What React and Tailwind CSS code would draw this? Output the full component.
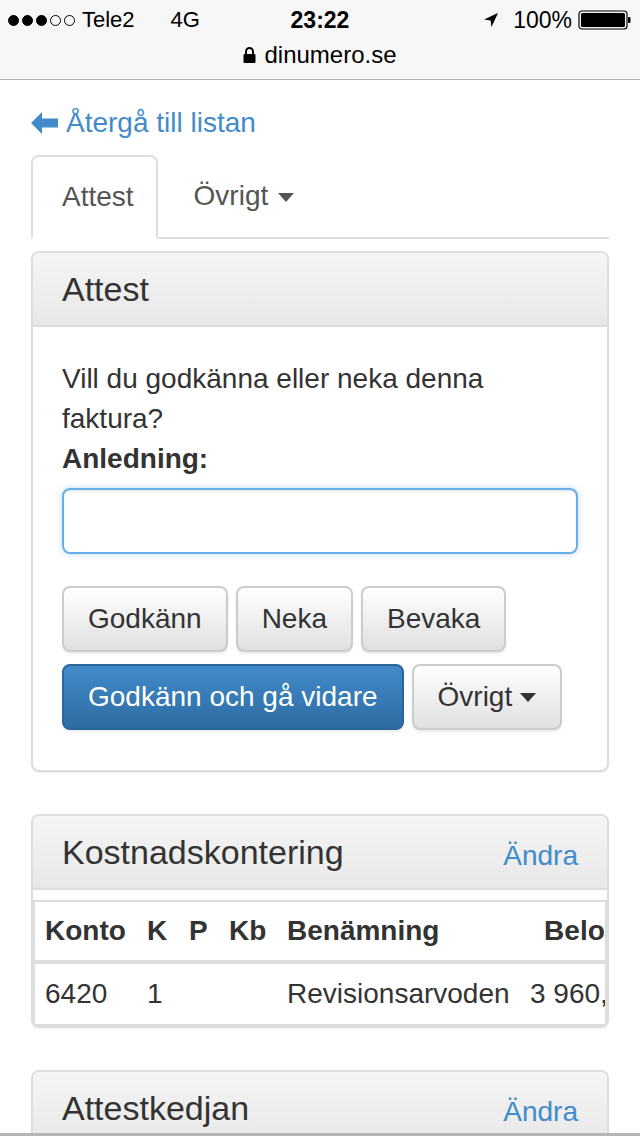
import { useState } from 'react'

function Caret({ className = '' }) {
  return (
    <svg className={className} width="16" height="9" viewBox="0 0 16 9">
      <path d="M0 0h16L8 9z" fill="currentColor" />
    </svg>
  )
}

function StatusBar() {
  return (
    <div className="h-[80px] bg-[#f7f7f7] border-b border-[#b0b0b0] text-black">
      <div className="grid grid-cols-3 items-center h-[40px] px-[8px] text-[22px] leading-none">
        <div className="flex items-center">
          <div className="flex items-center gap-[3px] mr-[7px]">
            {[1, 1, 1, 0, 0].map((on, i) => (
              <span key={i} className={`w-[11px] h-[11px] rounded-full border border-black ${on ? 'bg-black' : ''}`} />
            ))}
          </div>
          <span>Tele2</span>
          <span className="ml-[36px]">4G</span>
        </div>
        <div className="text-center font-bold text-[23px]">23:22</div>
        <div className="flex items-center justify-end">
          <svg width="16" height="16" viewBox="0 0 16 16" className="mr-[14px]">
            <path d="M15 1L1 7.5l6.6.9.9 6.6z" fill="black" />
          </svg>
          <span className="text-[23px]">100%</span>
          <svg width="54" height="20" viewBox="0 0 54 20" className="ml-[6px]">
            <rect x="1" y="1" width="48" height="18" rx="3" fill="none" stroke="black" strokeWidth="1.2" />
            <rect x="3" y="3" width="44" height="14" rx="1.5" fill="black" />
            <rect x="50" y="7" width="2.5" height="6" rx="1" fill="black" />
          </svg>
        </div>
      </div>
      <div className="flex items-center justify-center gap-[8px] h-[30px] text-[24px] leading-none">
        <svg width="13" height="16" viewBox="0 0 13 16">
          <path d="M3 7V4.5a3.5 3.5 0 017 0V7" fill="none" stroke="black" strokeWidth="2" />
          <rect x="0.5" y="7" width="12" height="9" rx="1" fill="black" />
        </svg>
        <span>dinumero.se</span>
      </div>
    </div>
  )
}

function PanelHeader({ title, action }) {
  return (
    <div className="flex items-center justify-between h-[74px] px-[29px] bg-linear-to-b from-[#f5f5f5] to-[#e8e8e8] border-b-2 border-[#dddddd] rounded-t-[6px]">
      <h3 className="text-[34px] leading-none text-[#333]">{title}</h3>
      {action && <a className="text-[28px] text-[#428bca] mt-[8px]">{action}</a>}
    </div>
  )
}

function Btn({ children, primary }) {
  const look = primary
    ? 'bg-linear-to-b from-[#428bca] to-[#2d6ca2] border-[#2b669a] text-white'
    : 'bg-linear-to-b from-white to-[#e0e0e0] border-[#cccccc] text-[#333]'
  return (
    <button className={`h-[66px] px-[24px] border-2 rounded-[8px] text-[28px] leading-none shadow-[0_2px_2px_rgba(0,0,0,0.075)] flex items-center ${look}`}>
      {children}
    </button>
  )
}

const rows = [
  { konto: '6420', k: '1', p: '', kb: '', namn: 'Revisionsarvoden', belopp: '3 960,00' },
]

export default function App() {
  const [reason, setReason] = useState('')

  return (
    <div className="min-h-[1136px] bg-white font-['Liberation_Sans',Arial,sans-serif] text-[#333]">
      <StatusBar />

      <div className="px-[31px]">
        <a className="flex items-center gap-[8px] pt-[23px] text-[28px] leading-[40px] text-[#428bca]">
          <svg width="27" height="22" viewBox="0 0 27 22">
            <path d="M0 11L11 0v6.5h16v9H11V22z" fill="#428bca" />
          </svg>
          Återgå till listan
        </a>

        {/* tabs */}
        <div className="flex mt-[12px] border-b-2 border-[#dddddd]">
          <div className="-mb-[2px] pl-[29px] pr-[22px] py-[20px] leading-[40px] text-[28px] text-[#555] bg-white border-2 border-[#dddddd] border-b-transparent rounded-t-[8px]">
            Attest
          </div>
          <div className="flex items-center gap-[10px] ml-[36px] text-[28px] leading-[40px] text-[#555]">
            Övrigt <Caret className="text-[#555] mt-[2px]" />
          </div>
        </div>

        {/* attest panel */}
        <div className="mt-[12px] border-2 border-[#dddddd] rounded-[8px] shadow-[0_1px_2px_rgba(0,0,0,0.05)]">
          <PanelHeader title="Attest" />
          <div className="px-[29px] pt-[32px] pb-[40px] text-[28px] leading-[40px]">
            <p>Vill du godkänna eller neka denna faktura?</p>
            <label className="block font-bold mb-[9px]">Anledning:</label>
            <input
              value={reason}
              onChange={e => setReason(e.target.value)}
              className="block w-full h-[66px] px-[24px] border-2 border-[#66afe9] rounded-[8px] outline-none shadow-[inset_0_2px_2px_rgba(0,0,0,0.075),0_0_6px_rgba(102,175,233,0.4)]"
            />
            <div className="flex gap-[8px] mt-[32px]">
              <Btn>Godkänn</Btn>
              <Btn>Neka</Btn>
              <Btn>Bevaka</Btn>
            </div>
            <div className="flex gap-[8px] mt-[12px]">
              <Btn primary>Godkänn och gå vidare</Btn>
              <Btn>
                Övrigt <Caret className="ml-[8px] text-[#333]" />
              </Btn>
            </div>
          </div>
        </div>

        {/* kontering */}
        <div className="mt-[42px] border-2 border-[#dddddd] rounded-[8px] shadow-[0_1px_2px_rgba(0,0,0,0.05)]">
          <PanelHeader title="Kostnadskontering" action="Ändra" />
          <div className="mt-[10px] border-2 border-[#dddddd] overflow-hidden">
            <table className="table-fixed w-[614px] text-[28px] text-left whitespace-nowrap">
              <colgroup>
                <col className="w-[102px]" />
                <col className="w-[42px]" />
                <col className="w-[40px]" />
                <col className="w-[58px]" />
                <col className="w-[243px]" />
                <col className="w-[129px]" />
              </colgroup>
              <thead>
                <tr className="h-[60px] border-b-4 border-[#dddddd]">
                  <th className="px-[10px] font-bold">Konto</th>
                  <th className="px-[10px] font-bold">K</th>
                  <th className="px-[10px] font-bold">P</th>
                  <th className="px-[10px] font-bold">Kb</th>
                  <th className="px-[10px] font-bold">Benämning</th>
                  <th className="px-[10px] font-bold text-right">Belopp</th>
                </tr>
              </thead>
              <tbody>
                {rows.map(r => (
                  <tr key={r.konto} className="h-[62px]">
                    <td className="px-[10px]">{r.konto}</td>
                    <td className="px-[10px]">{r.k}</td>
                    <td className="px-[10px]">{r.p}</td>
                    <td className="px-[10px]">{r.kb}</td>
                    <td className="px-[10px]">{r.namn}</td>
                    <td className="px-[10px] text-right">{r.belopp}</td>
                  </tr>
                ))}
              </tbody>
            </table>
          </div>
        </div>

        {/* attestkedja */}
        <div className="mt-[42px] border-2 border-[#dddddd] rounded-[8px]">
          <PanelHeader title="Attestkedjan" action="Ändra" />
          <div className="h-[120px]" />
        </div>
      </div>

      <div className="fixed bottom-0 left-0 right-0 h-[3px] bg-[#b5b5b5]" />
    </div>
  )
}
